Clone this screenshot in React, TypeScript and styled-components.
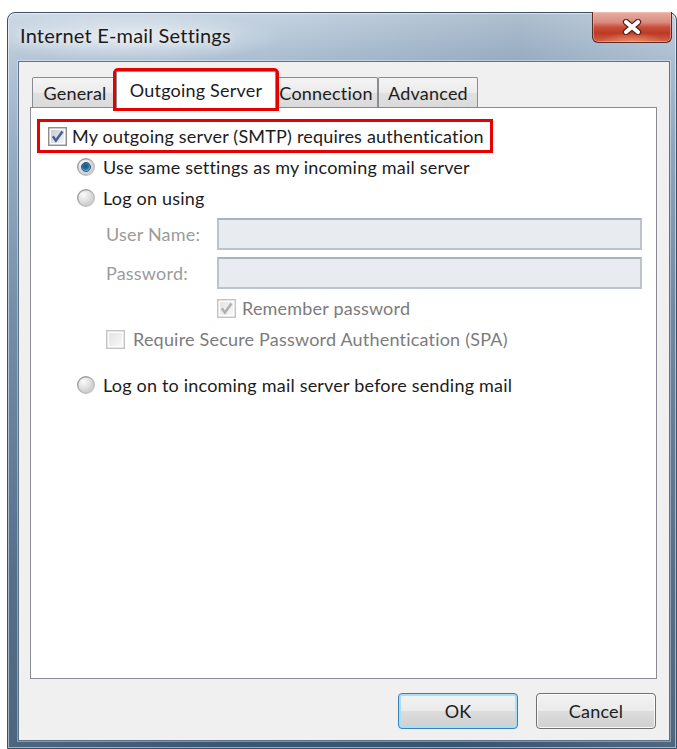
import { useId } from 'react';
import styled, { createGlobalStyle } from 'styled-components';

const GlobalStyle = createGlobalStyle`
  html, body {
    margin: 0;
    padding: 0;
    background: #fff;
  }
  body {
    font-family: Lato, "Open Sans", "Liberation Sans", sans-serif;
    font-size: 18px;
    letter-spacing: 0.2px;
    color: #1c1c1c;
  }
`;

// gradient ids inside inline svg must be plain identifiers
const useSvgId = (prefix: string) => prefix + useId().replace(/[^a-zA-Z0-9]/g, '');

type CheckBoxType = {
  checked?: boolean;
  disabled?: boolean;
}

const CheckBox = ({ checked, disabled }: CheckBoxType) => {
  const id = useSvgId('cb');
  return (
    <svg width="19" height="19" viewBox="0 0 13 13">
      <defs>
        <linearGradient id={id} x1="0" y1="0" x2="1" y2="1">
          <stop offset="0" stopColor={disabled ? '#e4e4e4' : '#c6ccd6'} />
          <stop offset="1" stopColor={disabled ? '#f8f8f8' : '#f4f5f8'} />
        </linearGradient>
      </defs>
      <rect x="0.5" y="0.5" width="12" height="12" fill="#fff" stroke={disabled ? '#c4c4c4' : '#8e8f8f'} />
      <rect x="2" y="2" width="9" height="9" fill={`url(#${id})`} />
      {checked && (
        <path
          d="M3.3 6.3 L5.4 9.3 L9.9 3.1"
          fill="none"
          stroke={disabled ? '#b0b0b0' : '#4a5e91'}
          strokeWidth="1.7"
        />
      )}
    </svg>
  );
};

const RadioDot = ({ checked }: { checked?: boolean }) => {
  const id = useSvgId('rd');
  return (
    <svg width="18" height="18" viewBox="0 0 13 13">
      <defs>
        <linearGradient id={`${id}r`} x1="0" y1="0" x2="1" y2="1">
          <stop offset="0" stopColor="#8f8f8f" />
          <stop offset="1" stopColor="#cfcfcf" />
        </linearGradient>
        <radialGradient id={`${id}f`} cx="0.35" cy="0.3" r="0.8">
          <stop offset="0" stopColor="#fbfbfb" />
          <stop offset="1" stopColor="#c4c4c4" />
        </radialGradient>
        <radialGradient id={`${id}d`} cx="0.45" cy="0.4" r="0.6">
          <stop offset="0" stopColor="#124f82" />
          <stop offset="0.55" stopColor="#2a72a6" />
          <stop offset="1" stopColor="#78c0e8" />
        </radialGradient>
      </defs>
      <circle cx="6.5" cy="6.5" r="6" fill={`url(#${id}f)`} stroke={`url(#${id}r)`} />
      {checked && (
        <circle cx="6.5" cy="6.5" r="3.3" fill={`url(#${id}d)`} stroke="#1d4a70" strokeWidth="0.6" />
      )}
    </svg>
  );
};

const CloseGlyph = () => (
  <svg width="22" height="16" viewBox="0 0 22 16">
    <path d="M5 3 L17 13 M17 3 L5 13" stroke="#5a1d15" strokeWidth="6.4" strokeLinecap="round" />
    <path d="M5 3 L17 13 M17 3 L5 13" stroke="#fff" strokeWidth="4.2" strokeLinecap="round" />
  </svg>
);

const tabs = [
  { label: 'General', width: 86 },
  { label: 'Outgoing Server', width: 160, active: true },
  { label: 'Connection', width: 104 },
  { label: 'Advanced', width: 100 },
];

const App = () => (
  <>
    <GlobalStyle />
    <Page>
      <Window>
        <TitleBar>
          <Title>Internet E-mail Settings</Title>
          <CloseButton type="button" aria-label="Close">
            <CloseGlyph />
          </CloseButton>
        </TitleBar>

        <Client>
          <TabRow>
            {tabs.map(tab => (
              <Tab key={tab.label} $width={tab.width} $active={tab.active}>
                {tab.label}
              </Tab>
            ))}
          </TabRow>

          <Panel>
            <Highlight>
              <CheckBox checked />
              <span>My outgoing server (SMTP) requires authentication</span>
            </Highlight>

            <OptionRow $indent={40} $top={3} $gap={8}>
              <RadioDot checked />
              <span>Use same settings as my incoming mail server</span>
            </OptionRow>
            <OptionRow $indent={40} $top={9} $gap={8}>
              <RadioDot />
              <span>Log on using</span>
            </OptionRow>

            <Credentials>
              <FieldLabel>User Name:</FieldLabel>
              <FieldInput disabled />
              <FieldLabel>Password:</FieldLabel>
              <FieldInput disabled type="password" />
            </Credentials>

            <OptionRow $indent={180} $top={8} $gap={6} $muted>
              <CheckBox checked disabled />
              <span>Remember password</span>
            </OptionRow>
            <OptionRow $indent={69} $top={9} $gap={8} $muted>
              <CheckBox disabled />
              <span>Require Secure Password Authentication (SPA)</span>
            </OptionRow>

            <OptionRow $indent={40} $top={24} $gap={8}>
              <RadioDot />
              <span>Log on to incoming mail server before sending mail</span>
            </OptionRow>
          </Panel>

          <ButtonRow>
            <DialogButton type="button" $primary>OK</DialogButton>
            <DialogButton type="button">Cancel</DialogButton>
          </ButtonRow>
        </Client>
      </Window>
    </Page>
  </>
);

const Page = styled.div`
  box-sizing: border-box;
  width: 677px;
  height: 749px;
  padding: 12px 0 0 7px;
  overflow: hidden;
`;

const Window = styled.div`
  box-sizing: border-box;
  width: 670px;
  height: 737px;
  display: flex;
  flex-direction: column;
  padding: 0 6px 7px 10px;
  border: 1px solid #3b4f65;
  border-radius: 8px 8px 0 0;
  box-shadow: inset 0 0 0 1px rgba(255, 255, 255, 0.5);
  background:
    radial-gradient(ellipse 200px 34px at 125px 24px, rgba(255, 255, 255, 0.6), rgba(255, 255, 255, 0) 75%),
    linear-gradient(95deg, rgba(255, 255, 255, 0.12) 0%, rgba(255, 255, 255, 0) 35%, rgba(30, 60, 95, 0.14) 70%, rgba(255, 255, 255, 0.1) 100%),
    linear-gradient(180deg, #c6d4e1 0px, #abbfd2 46px, #8ba5be 130px, #62819f 300px, #43617f 560px, #3a5774 100%);
`;

const TitleBar = styled.div`
  height: 48px;
  display: flex;
  justify-content: space-between;
  align-items: flex-start;
  margin-right: -2px;
  padding-left: 2px;
`;

const Title = styled.span`
  margin-top: 11px;
  line-height: 22px;
  font-size: 20px;
  color: #1b1b1b;
  text-shadow: 0 0 8px rgba(255, 255, 255, 0.9);
`;

const CloseButton = styled.button`
  box-sizing: border-box;
  width: 80px;
  height: 31px;
  margin-top: -1px;
  padding: 0;
  display: flex;
  align-items: center;
  justify-content: center;
  border: 1px solid #5b2a24;
  border-top: none;
  border-radius: 0 0 6px 6px;
  box-shadow: inset 0 0 0 1px rgba(255, 200, 190, 0.45);
  background:
    radial-gradient(ellipse 40px 12px at 50% 100%, rgba(255, 170, 120, 0.6), rgba(255, 170, 120, 0) 80%),
    linear-gradient(180deg, #e6b0a4 0%, #d98a7c 35%, #c9503c 50%, #bd3a24 70%, #d4624a 100%);
`;

const Client = styled.div`
  flex: 1;
  display: flex;
  flex-direction: column;
  background: #f0f0f0;
  border: 1px solid #5e7288;
  box-shadow: 0 0 0 1px rgba(255, 255, 255, 0.35);
`;

const TabRow = styled.div`
  height: 36px;
  margin-top: 9px;
  padding-left: 13px;
  display: flex;
  align-items: flex-end;
`;

const Tab = styled.div<{ $width: number; $active?: boolean }>`
  box-sizing: border-box;
  width: ${({ $width }) => $width}px;
  height: ${({ $active }) => $active ? 37 : 30}px;
  margin: ${({ $active }) => $active ? '0 -2px -1px' : '0'};
  display: flex;
  align-items: center;
  justify-content: center;
  white-space: nowrap;
  border: 1px solid #898c95;
  border-bottom: none;
  border-radius: 2px 2px 0 0;
  background: ${({ $active }) => $active
    ? '#fff'
    : 'linear-gradient(180deg, #f4f4f4 0%, #ebebeb 50%, #e0e0e0 51%, #dbdbdb 100%)'};
  outline: ${({ $active }) => $active ? '3px solid #e60000' : 'none'};
  position: ${({ $active }) => $active ? 'relative' : 'static'};
  z-index: ${({ $active }) => $active ? 1 : 'auto'};
`;

const Panel = styled.div`
  box-sizing: border-box;
  height: 572px;
  margin: 0 12px 0 11px;
  padding: 11px 14px 0 6px;
  display: flex;
  flex-direction: column;
  align-items: flex-start;
  background: #fff;
  border: 1px solid #898c95;
`;

const Highlight = styled.label`
  box-sizing: border-box;
  height: 34px;
  display: inline-flex;
  align-items: center;
  gap: 5px;
  padding: 0 6px 0 8px;
  border: 3px solid #e60000;
  white-space: nowrap;
`;

type OptionRowType = {
  $indent: number;
  $top: number;
  $gap: number;
  $muted?: boolean;
}

const OptionRow = styled.label<OptionRowType>`
  height: 22px;
  display: flex;
  align-items: center;
  gap: ${({ $gap }) => $gap}px;
  margin: ${({ $top, $indent }) => `${$top}px 0 0 ${$indent}px`};
  color: ${({ $muted }) => $muted ? '#7c7c7c' : '#1c1c1c'};
  white-space: nowrap;
`;

const Credentials = styled.div`
  align-self: stretch;
  display: grid;
  grid-template-columns: 111px 1fr;
  row-gap: 7px;
  align-items: center;
  margin: 9px 0 0 69px;
`;

const FieldLabel = styled.span`
  color: #9b9b9b;
`;

const FieldInput = styled.input`
  box-sizing: border-box;
  height: 32px;
  margin: 0;
  border: 2px solid #b9c4cf;
  border-top-color: #a6b3c0;
  background: #e8ecf1;
`;

const ButtonRow = styled.div`
  display: flex;
  justify-content: flex-end;
  gap: 18px;
  margin-top: 14px;
  padding-right: 13px;
`;

const DialogButton = styled.button<{ $primary?: boolean }>`
  box-sizing: border-box;
  width: 120px;
  height: 36px;
  font-family: inherit;
  font-size: 18px;
  letter-spacing: 0.2px;
  color: #1c1c1c;
  border-radius: 4px;
  border: 1px solid ${({ $primary }) => $primary ? '#3c7fb1' : '#707070'};
  box-shadow: inset 0 0 0 ${({ $primary }) => $primary ? '2px #a9def6' : '1px rgba(255, 255, 255, 0.85)'};
  background: linear-gradient(180deg, #f2f2f2 0%, #ebebeb 49%, #dddddd 50%, #cfcfcf 100%);
`;

export default App;
